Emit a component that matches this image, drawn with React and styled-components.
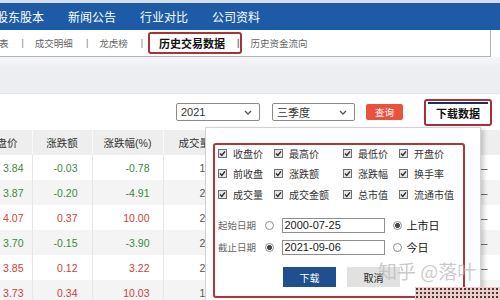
import styled, { createGlobalStyle } from "styled-components";

const GlobalStyle = createGlobalStyle`
  html, body { margin: 0; padding: 0; background: #fff; }
  body {
    font-family: "Liberation Sans", "Noto Sans CJK SC", sans-serif;
    overflow: hidden;
  }
`;

const navItems = ["股东股本", "新闻公告", "行业对比", "公司资料"];

const rows = [
  { close: "3.84", chg: "-0.03", pct: "-0.78", vol: "1.35亿", up: false },
  { close: "3.87", chg: "-0.20", pct: "-4.91", vol: "2.58亿", up: false },
  { close: "4.07", chg: "0.37", pct: "10.00", vol: "2.17亿", up: true },
  { close: "3.70", chg: "-0.15", pct: "-3.90", vol: "2.53亿", up: false },
  { close: "3.85", chg: "0.12", pct: "3.22", vol: "2.46亿", up: true },
  { close: "3.73", chg: "0.34", pct: "10.03", vol: "1.89亿", up: true },
];

const fields = [
  "收盘价", "最高价", "最低价", "开盘价",
  "前收盘", "涨跌额", "涨跌幅", "换手率",
  "成交量", "成交金额", "总市值", "流通市值",
];

function CheckIcon() {
  return (
    <svg width="9" height="9" viewBox="0 0 9 9">
      <rect x="0.5" y="0.5" width="8" height="8" fill="#e6e6e6" stroke="#6f6f6f" />
      <path d="M2 4.6 L3.8 6.4 L7 2.4" fill="none" stroke="#2a2a2a" strokeWidth="1.4" />
    </svg>
  );
}

function Chevron() {
  return (
    <svg width="8" height="5" viewBox="0 0 8 5">
      <path d="M1 1 L4 4 L7 1" fill="none" stroke="#555" strokeWidth="1.3" />
    </svg>
  );
}

function App() {
  return (
    <Page>
      <GlobalStyle />
      <TopStrip />
      <NavBar>
        {navItems.map((t) => (
          <NavItem key={t}>{t}</NavItem>
        ))}
      </NavBar>
      <SubRow>
        <Tab>表</Tab>
        <Sep>|</Sep>
        <Tab>成交明细</Tab>
        <Sep>|</Sep>
        <Tab>龙虎榜</Tab>
        <Sep>|</Sep>
        <ActiveTab>
          历史交易数据
          <Sep>|</Sep>
        </ActiveTab>
        <Tab $after>历史资金流向</Tab>
      </SubRow>
      <Band />
      <Content>
        <Controls>
          <Select $w={84}>
            2021
            <Chevron />
          </Select>
          <Select $w={83}>
            三季度
            <Chevron />
          </Select>
          <QueryBtn>查询</QueryBtn>
          <DownloadFrame>
            <DownloadBtn>下载数据</DownloadBtn>
          </DownloadFrame>
        </Controls>
        <Table>
          <colgroup>
            <col style={{ width: 60 }} />
            <col style={{ width: 60 }} />
            <col style={{ width: 71 }} />
            <col style={{ width: 80 }} />
            <col style={{ width: 80 }} />
            <col style={{ width: 80 }} />
            <col style={{ width: 97 }} />
          </colgroup>
          <thead>
            <tr>
              <Th>收盘价</Th>
              <Th>涨跌额</Th>
              <Th>涨跌幅(%)</Th>
              <Th>成交量(股)</Th>
              <Th>成交金额</Th>
              <Th>换手率</Th>
              <Th>总市值</Th>
            </tr>
          </thead>
          <tbody>
            {rows.map((r, i) => (
              <Tr key={i} $alt={i % 2 === 1}>
                <Td $up={r.up} $pad={8}>{r.close}</Td>
                <Td $up={r.up} $pad={14}>{r.chg}</Td>
                <Td $up={r.up} $pad={13}>{r.pct}</Td>
                <Td $plain $pad={12}>{r.vol}</Td>
                <Td $plain $pad={12}>—</Td>
                <Td $plain $pad={12}>—</Td>
                <Td $plain $pad={12}>—</Td>
              </Tr>
            ))}
          </tbody>
        </Table>
      </Content>

      <Popup>
        <RedFrame>
          <CheckGrid>
            {fields.map((f) => (
              <CheckItem key={f}>
                <CheckIcon />
                <span>{f}</span>
              </CheckItem>
            ))}
          </CheckGrid>
          <DateRow $first>
            <DateLabel>起始日期</DateLabel>
            <Radio />
            <DateInput>2000-07-25</DateInput>
            <Radio $checked $right />
            <RadioLabel>上市日</RadioLabel>
          </DateRow>
          <DateRow>
            <DateLabel>截止日期</DateLabel>
            <Radio $checked />
            <DateInput>2021-09-06</DateInput>
            <Radio $right />
            <RadioLabel>今日</RadioLabel>
          </DateRow>
          <ButtonRow>
            <ActionBtn $primary>下载</ActionBtn>
            <ActionBtn>取消</ActionBtn>
          </ButtonRow>
        </RedFrame>
      </Popup>
      <Watermark>知乎 @落叶</Watermark>
      <Dots />
    </Page>
  );
}

const Page = styled.div`
  position: relative;
  width: 500px;
  height: 300px;
  overflow: hidden;
  background: #fff;
  display: flex;
  flex-direction: column;
`;

const TopStrip = styled.div`
  height: 3px;
  flex-shrink: 0;
  background: #d6dfe9;
`;

const NavBar = styled.nav`
  height: 27px;
  flex-shrink: 0;
  display: flex;
  align-items: center;
  background: #1e5ba7;
`;

const NavItem = styled.span`
  width: 72px;
  flex-shrink: 0;
  color: #fff;
  font-size: 12px;
  white-space: nowrap;
  &:first-child {
    margin-left: -4px;
  }
`;

const SubRow = styled.div`
  box-sizing: border-box;
  width: 491px;
  height: 27px;
  flex-shrink: 0;
  display: flex;
  align-items: center;
  border-bottom: 1px solid #b4b4b4;
  border-right: 1px solid #b4b4b4;
  background: #fff;
`;

const Tab = styled.span`
  font-size: 9.5px;
  color: #666;
  white-space: nowrap;
  margin-left: ${({ $after }) => ($after ? "9px" : "0")};
  &:first-child {
    margin-left: -1px;
  }
`;

const Sep = styled.span`
  font-size: 9px;
  color: #777;
  margin: 0 11px 0 13px;
`;

const ActiveTab = styled.span`
  box-sizing: border-box;
  height: 22px;
  margin-left: -6px;
  padding: 0 0 0 9px;
  display: flex;
  align-items: center;
  border: 2px solid #a8323a;
  border-radius: 3px;
  font-size: 11px;
  font-weight: bold;
  color: #111;
  white-space: nowrap;
  & > span {
    margin: 0 0 0 12px;
  }
`;

const Band = styled.div`
  height: 36px;
  flex-shrink: 0;
  background: linear-gradient(#f6f7f9, #eceef1 30%);
  border-bottom: 1px solid #dde0e4;
`;

const Content = styled.div`
  flex: 1;
  background: #fff;
`;

const Controls = styled.div`
  height: 36px;
  display: flex;
  align-items: center;
  justify-content: flex-end;
  padding-right: 8px;
`;

const Select = styled.div`
  box-sizing: border-box;
  width: ${({ $w }) => $w}px;
  height: 18px;
  margin-right: 12px;
  padding: 0 7px 0 4px;
  display: flex;
  align-items: center;
  justify-content: space-between;
  border: 1px solid #8a8a8a;
  border-radius: 2px;
  font-size: 11px;
  color: #333;
  & + & {
    margin-right: 11px;
  }
`;

const QueryBtn = styled.div`
  width: 37px;
  height: 16px;
  margin-right: 21px;
  display: flex;
  align-items: center;
  justify-content: center;
  background: #e8523f;
  border-radius: 2px;
  color: #fff;
  font-size: 9.5px;
`;

const DownloadFrame = styled.div`
  box-sizing: border-box;
  width: 68px;
  height: 27px;
  padding: 1px 2px;
  border: 2px solid #a3303a;
  border-radius: 3px;
  display: flex;
`;

const DownloadBtn = styled.div`
  flex: 1;
  display: flex;
  align-items: center;
  justify-content: center;
  border-top: 2px solid #1f2f58;
  font-size: 11px;
  font-weight: bold;
  color: #111;
`;

const Table = styled.table`
  width: 528px;
  margin-left: -28px;
  border-collapse: collapse;
  table-layout: fixed;
  font-size: 10.5px;
`;

const Th = styled.th`
  height: 25px;
  padding: 0;
  background: #eeeeee;
  border-right: 1px solid #fafafa;
  font-weight: normal;
  color: #333;
  text-align: center;
  white-space: nowrap;
`;

const Tr = styled.tr`
  background: ${({ $alt }) => ($alt ? "#f4f4f4" : "#fff")};
`;

const Td = styled.td`
  height: 25px;
  padding: 0 ${({ $pad }) => $pad}px 0 0;
  border-right: 1px solid #e6e6e6;
  text-align: right;
  white-space: nowrap;
  color: ${({ $up, $plain }) => ($plain ? "#555" : $up ? "#cf3d3a" : "#3b8a3e")};
`;

const Popup = styled.div`
  position: absolute;
  left: 205px;
  top: 127px;
  box-sizing: border-box;
  width: 276px;
  height: 190px;
  background: #fff;
  border: 1px solid #d2d2d2;
  box-shadow: 3px 2px 4px rgba(0, 0, 0, 0.18);
  padding: 15px 0 0 7px;
`;

const RedFrame = styled.div`
  box-sizing: border-box;
  width: 252px;
  border: 2px solid #b2353c;
  border-radius: 3px;
  padding: 0 0 9px 3px;
`;

const CheckGrid = styled.div`
  display: grid;
  grid-template-columns: 56px 69px 56px auto;
  grid-auto-rows: 16px;
  row-gap: 4.5px;
`;

const CheckItem = styled.label`
  display: flex;
  align-items: center;
  gap: 6px;
  font-size: 10px;
  color: #333;
  white-space: nowrap;
  & svg {
    flex-shrink: 0;
  }
`;

const DateRow = styled.div`
  height: 18px;
  margin-top: ${({ $first }) => ($first ? "14px" : "4px")};
  display: flex;
  align-items: center;
`;

const DateLabel = styled.span`
  width: 47px;
  font-size: 9.5px;
  color: #666;
  white-space: nowrap;
`;

const Radio = styled.span`
  box-sizing: border-box;
  width: 9px;
  height: 9px;
  border-radius: 50%;
  border: 1px solid #8c8c8c;
  background: ${({ $checked }) =>
    $checked ? "radial-gradient(circle, #4a4a4a 0 2.2px, #fff 2.6px)" : "#fff"};
  margin: ${({ $right }) => ($right ? "0 0 0 8px" : "0 7.5px 0 0")};
  flex-shrink: 0;
`;

const DateInput = styled.span`
  box-sizing: border-box;
  width: 103px;
  height: 15px;
  padding-left: 2px;
  display: flex;
  align-items: center;
  border: 1px solid #8e8e8e;
  font-size: 11px;
  color: #1a1a1a;
`;

const RadioLabel = styled.span`
  margin-left: 5px;
  font-size: 11px;
  color: #111;
  white-space: nowrap;
`;

const ButtonRow = styled.div`
  margin-top: 11px;
  padding-left: 65px;
  display: flex;
  gap: 11px;
`;

const ActionBtn = styled.div`
  width: 53px;
  height: 20px;
  display: flex;
  align-items: center;
  justify-content: center;
  font-size: 10px;
  background: ${({ $primary }) => ($primary ? "#1f4f8e" : "#e1e1e1")};
  color: ${({ $primary }) => ($primary ? "#fff" : "#222")};
`;

const Watermark = styled.div`
  position: absolute;
  left: 378px;
  top: 258px;
  font-family: "Noto Sans CJK SC", sans-serif;
  font-size: 19px;
  line-height: 26px;
  color: rgba(185, 185, 185, 0.75);
  white-space: nowrap;
`;

const Dots = styled.div`
  position: absolute;
  left: 415px;
  top: 287px;
  width: 85px;
  height: 13px;
  background-color: #f3caca;
  background-image: radial-gradient(circle, #3a3a3a 0 0.7px, transparent 1px);
  background-size: 4px 4px;
`;

export default App;
